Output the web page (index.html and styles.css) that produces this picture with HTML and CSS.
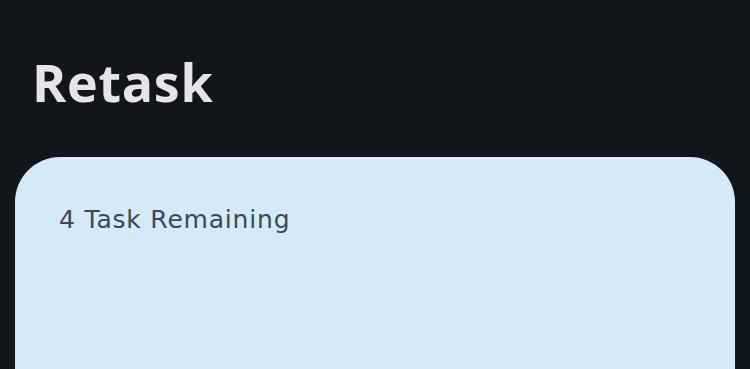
FILE: index.html
```html
<!DOCTYPE html>
<html lang="en">
<head>
<meta charset="utf-8">
<title>Retask</title>
<link rel="stylesheet" href="styles.css">
</head>
<body>
<main class="app">
  <header class="app-header">
    <h1 class="app-title">Retask</h1>
  </header>
  <section class="task-card">
    <p class="task-count">4 Task Remaining</p>
  </section>
</main>
</body>
</html>
```
FILE: styles.css
```css
html, body {
  margin: 0;
  padding: 0;
  height: 100%;
  overflow: hidden;
}
body {
  background: #12151a;
  font-family: "Open Sans", "Noto Sans", sans-serif;
}
.app {
  display: flex;
  flex-direction: column;
  padding: 0 15px;
  min-height: 100%;
}
.app-header {
  padding: 56px 0 49px 17px;
}
.app-title {
  margin: 0;
  font-size: 52px;
  line-height: 1;
  font-weight: 700;
  letter-spacing: 0.7px;
  color: #e4e4ea;
}
.task-card {
  flex: 1;
  background: #d6e9f7;
  border-radius: 45px 45px 0 0;
  padding: 50px 44px;
  min-height: 400px;
}
.task-count {
  margin: 0;
  font-family: "DejaVu Sans", "Open Sans", sans-serif;
  font-size: 25px;
  line-height: 1;
  font-weight: 400;
  letter-spacing: 0.8px;
  color: #3f4952;
}
```
